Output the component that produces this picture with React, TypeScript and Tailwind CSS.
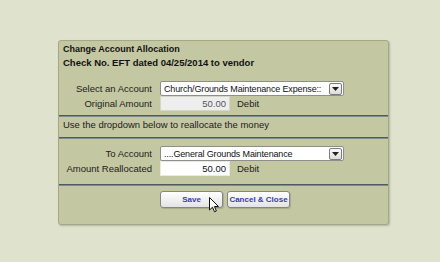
import React from 'react'

// Legacy "Change Account Allocation" dialog — olive panel on a pale page, two form blocks
// split by slate rules, and a pair of bevelled buttons.

function Select({ value }: { value: string }) {
  return (
    <div className="flex h-[15px] w-[184px] items-center rounded-[2px] border border-[#8e8e8e] bg-white pl-[3px] pr-[1px]">
      <span className="flex-1 overflow-hidden whitespace-nowrap text-[9px] tracking-[-0.15px] text-[#111]">{value}</span>
      <span className="flex h-[12px] w-[13px] shrink-0 items-center justify-center rounded-[2px] border border-[#7d7d7d] bg-gradient-to-b from-[#fbfbfb] to-[#dcdcdc]">
        <svg width="7" height="4" viewBox="0 0 7 4">
          <path d="M0 0h7L3.5 4z" fill="#222" />
        </svg>
      </span>
    </div>
  )
}

function Amount({ value, disabled }: { value: string; disabled?: boolean }) {
  return (
    <div
      className={
        disabled
          ? 'flex h-[15px] w-[70px] items-center justify-end border border-[#d4d6c8] bg-[#eeeeee] pr-[3px] text-[#555]'
          : 'flex h-[15px] w-[70px] items-center justify-end border border-[#e9ebe0] bg-white pr-[3px] text-[#111]'
      }
    >
      {value}
    </div>
  )
}

function Row({ label, children }: { label: string; children: React.ReactNode }) {
  return (
    <div className="flex h-[15px] items-center">
      <span className="w-[93px] whitespace-nowrap text-right">{label}</span>
      <div className="ml-[8px] flex items-center">{children}</div>
    </div>
  )
}

function Rule() {
  return <div className="h-[2px] border-t border-b border-t-[#4d5b5c] border-b-[#7f8d8a]" />
}

function Button({ children, className = '' }: { children: React.ReactNode; className?: string }) {
  return (
    <button
      type="button"
      className={`flex h-[17px] items-center justify-center whitespace-nowrap rounded-[3px] border border-[#858585] bg-gradient-to-b from-white to-[#e3e3e3] text-[8px] font-bold text-[#3b3bab] shadow-[1px_1px_1px_rgba(0,0,0,0.15)] ${className}`}
    >
      {children}
    </button>
  )
}

export default function App() {
  return (
    <div className="h-[262px] w-[440px] overflow-hidden bg-[#dfe2cd] pl-[58px] pt-[40px] font-['Liberation_Sans',Arial,sans-serif] text-[9.5px] leading-[12px] text-[#1b1b1b]">
      <div className="relative h-[185px] w-[331px] rounded-[3px] border border-[#a4a884] bg-[#c4c8a2] shadow-[1px_1px_2px_rgba(0,0,0,0.2)]">
        <div className="px-[4px] pt-[2px] font-bold leading-[13px] text-[#111]">
          <div className="text-[9px]">Change Account Allocation</div>
          <div>Check No. EFT dated 04/25/2014 to vendor</div>
        </div>

        <div className="mt-[12px]">
          <Row label="Select an Account">
            <Select value="Church/Grounds Maintenance Expense::" />
          </Row>
          <Row label="Original Amount">
            <Amount value="50.00" disabled />
            <span className="ml-[7px]">Debit</span>
          </Row>
        </div>

        <div className="mt-[4px]">
          <Rule />
        </div>
        <div className="px-[4px] pt-[2px] leading-[12px]">Use the dropdown below to reallocate the money</div>
        <div className="mt-[6px]">
          <Rule />
        </div>

        <div className="mt-[7px]">
          <Row label="To Account">
            <Select value="....General Grounds Maintenance" />
          </Row>
          <Row label="Amount Reallocated">
            <Amount value="50.00" />
            <span className="ml-[7px]">Debit</span>
          </Row>
        </div>

        <div className="mt-[8px]">
          <Rule />
        </div>

        <div className="mt-[5px] flex gap-[4px] pl-[101px]">
          <Button className="w-[63px]">Save</Button>
          <Button className="w-[63px]">Cancel &amp; Close</Button>
        </div>

        {/* mouse pointer hovering over Save */}
        <svg className="absolute left-[150px] top-[156px]" width="10" height="16" viewBox="0 0 10 16">
          <path
            d="M0.5 0.5v12.5l3-2.8 2 4.6 1.9-0.8-2-4.5h4.1z"
            fill="#fff"
            stroke="#111"
            strokeWidth="1"
            strokeLinejoin="round"
          />
        </svg>
      </div>
    </div>
  )
}
